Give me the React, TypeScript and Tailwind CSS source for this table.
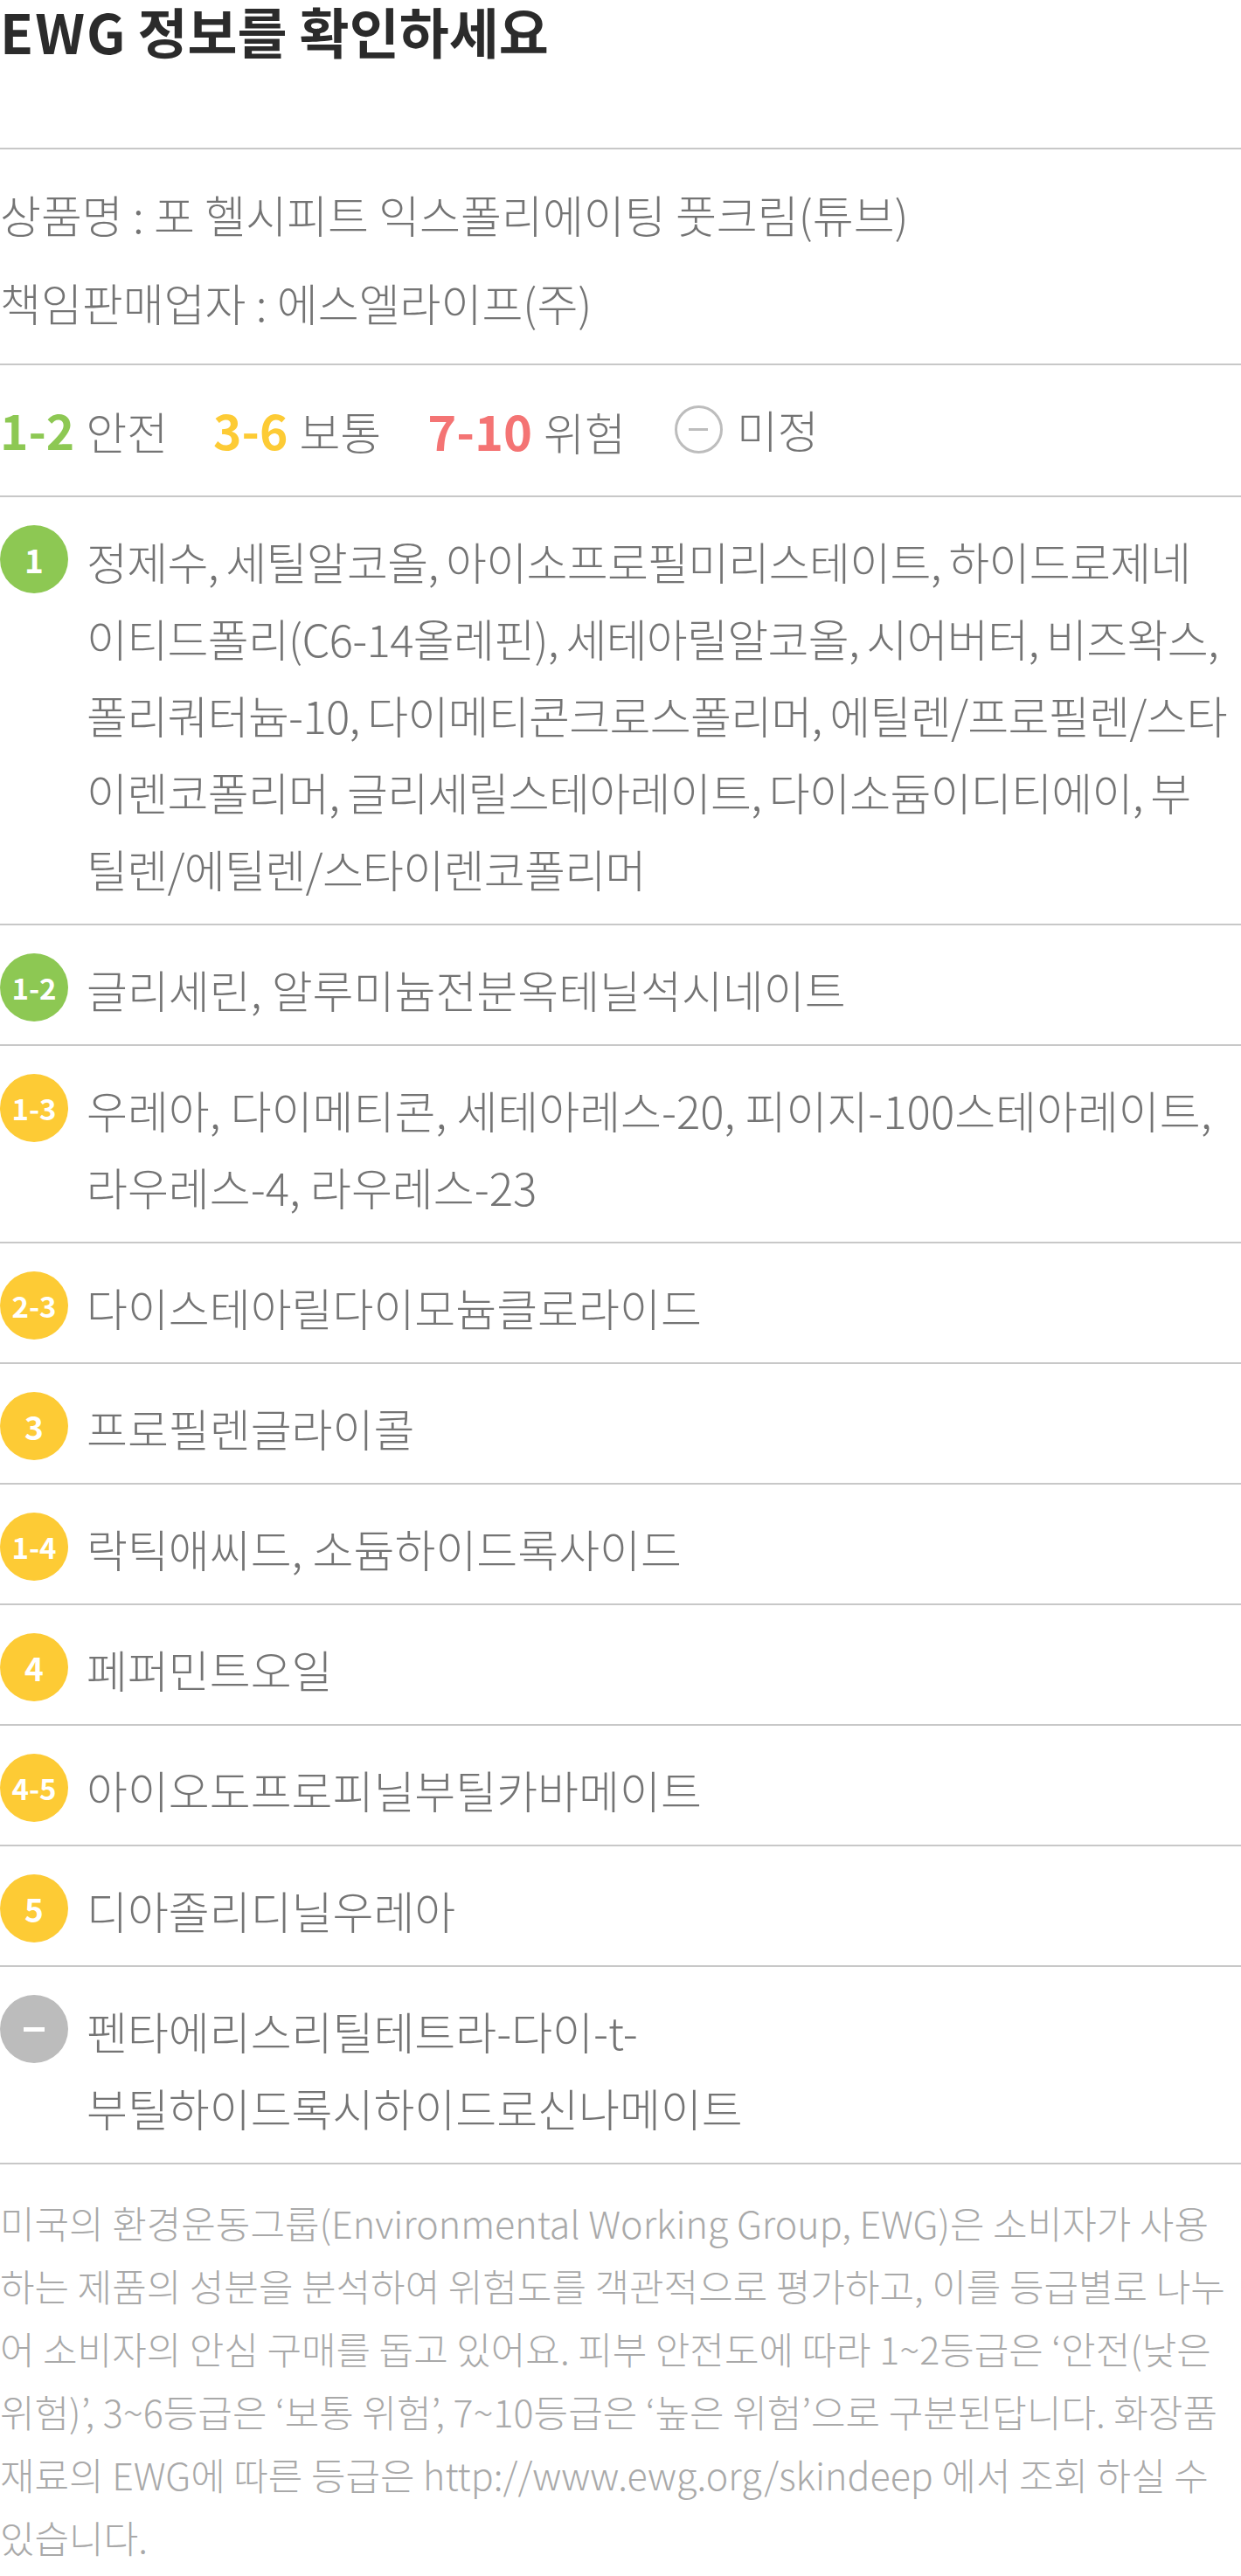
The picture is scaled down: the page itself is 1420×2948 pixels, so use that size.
import React from 'react';

type Item = { grade: string; tone: 'green' | 'yellow' | 'gray'; text: React.ReactNode; tight?: boolean };

// the first row is set line by line so it wraps where the original does
const firstRow = [
  '정제수, 세틸알코올, 아이소프로필미리스테이트, 하이드로제네',
  '이티드폴리(C6-14올레핀), 세테아릴알코올, 시어버터, 비즈왁스,',
  '폴리쿼터늄-10, 다이메티콘크로스폴리머, 에틸렌/프로필렌/스타',
  '이렌코폴리머, 글리세릴스테아레이트, 다이소듐이디티에이, 부',
  '틸렌/에틸렌/스타이렌코폴리머',
];

const items: Item[] = [
  {
    grade: '1',
    tone: 'green',
    tight: true,
    text: firstRow.map((line, i) => (
      <React.Fragment key={i}>
        {line}
        {i < firstRow.length - 1 && <br />}
      </React.Fragment>
    )),
  },
  { grade: '1-2', tone: 'green', text: '글리세린, 알루미늄전분옥테닐석시네이트' },
  { grade: '1-3', tone: 'yellow', text: '우레아, 다이메티콘, 세테아레스-20, 피이지-100스테아레이트, 라우레스-4, 라우레스-23' },
  { grade: '2-3', tone: 'yellow', text: '다이스테아릴다이모늄클로라이드' },
  { grade: '3', tone: 'yellow', text: '프로필렌글라이콜' },
  { grade: '1-4', tone: 'yellow', text: '락틱애씨드, 소듐하이드록사이드' },
  { grade: '4', tone: 'yellow', text: '페퍼민트오일' },
  { grade: '4-5', tone: 'yellow', text: '아이오도프로피닐부틸카바메이트' },
  { grade: '5', tone: 'yellow', text: '디아졸리디닐우레아' },
  {
    grade: '-',
    tone: 'gray',
    text: (
      <>
        펜타에리스리틸테트라-다이-t-<span className="whitespace-nowrap">부틸하이드록시하이드로신나메이트</span>
      </>
    ),
  },
];

const toneBg = {
  green: 'bg-[#8dc853]',
  yellow: 'bg-[#fdcb35]',
  gray: 'bg-[#bcbcbc]',
};

function Badge({ grade, tone }: { grade: string; tone: Item['tone'] }) {
  return (
    <div
      className={`mt-[3px] flex h-[78px] w-[78px] shrink-0 items-center justify-center rounded-full text-white font-bold ${toneBg[tone]}`}
    >
      {grade === '-' ? (
        <span className="block h-[5px] w-[24px] bg-white" />
      ) : (
        <span className={grade.length > 1 ? 'text-[33px] leading-none' : 'text-[37px] leading-none'}>{grade}</span>
      )}
    </div>
  );
}

export default function App() {
  return (
    <div className="w-[1420px] bg-white font-['Noto_Sans_CJK_KR',sans-serif] text-[#747474]">
      {/* title */}
      <div className="h-[171px] border-b-2 border-[#c8c8c8]">
        <h1 className="text-[62px] font-bold leading-[70px] text-[#2b2b2b]">
          <span className="tracking-[2px]">EW</span>G 정보를 확인하세요
        </h1>
      </div>

      {/* product */}
      <div className="flex flex-col gap-[13px] border-b-2 border-[#c8c8c8] pt-[30px] pb-[26px] text-[51px] leading-[88px] font-light">
        <p>상품명 : 포 헬시피트 익스폴리에이팅 풋크림(튜브)</p>
        <p>책임판매업자 : 에스엘라이프(주)</p>
      </div>

      {/* legend */}
      <div className="flex h-[151px] items-center border-b-2 border-[#c8c8c8] pb-[2px] text-[51px] font-light">
        <div className="flex items-baseline gap-[13px]">
          <span className="text-[55px] font-bold text-[#8dc853]">1-2</span>
          <span>안전</span>
        </div>
        <div className="ml-[52px] flex items-baseline gap-[13px]">
          <span className="text-[55px] font-bold text-[#fdcb35]">3-6</span>
          <span>보통</span>
        </div>
        <div className="ml-[53px] flex items-baseline gap-[13px]">
          <span className="text-[56px] font-bold text-[#f47474]">7-10</span>
          <span>위험</span>
        </div>
        <div className="ml-[56px] flex items-center gap-[16px]">
          <span className="flex h-[55px] w-[55px] items-center justify-center rounded-full border-[3px] border-[#bdbdbd]">
            <span className="block h-[3px] w-[22px] bg-[#bdbdbd]" />
          </span>
          <span>미정</span>
        </div>
      </div>

      {/* ingredients */}
      {items.map((item, i) => (
        <div key={i} className="flex items-start border-b-2 border-[#c8c8c8] pt-[29px] pb-[19px]">
          <Badge grade={item.grade} tone={item.tone} />
          <p
            className={`ml-[21px] flex-1 text-[51px] leading-[88px] font-light ${
              item.tight ? 'tracking-[-0.7px] [word-spacing:-2px]' : ''
            }`}
          >
            {item.text}
          </p>
        </div>
      ))}

      {/* note */}
      <p className="pt-[30px] text-[43px] leading-[72px] font-light text-[#a9a9a9]">
        미국의 환경운동그룹(Environmental Working Group, EWG)은 소비자가 사용하는 제품의 성분을 분석하여 위험도를 객관적으로 평가하고, 이를 등급별로 나누어 소비자의 안심 구매를 돕고 있어요. 피부 안전도에 따라 1~2등급은 ‘안전(낮은 위험)’, 3~6등급은 ‘보통 위험’, 7~10등급은 ‘높은 위험’으로 구분된답니다. 화장품 재료의 EWG에 따른 등급은 http://www.ewg.org/skindeep 에서 조회 하실 수 있습니다.
      </p>
    </div>
  );
}
